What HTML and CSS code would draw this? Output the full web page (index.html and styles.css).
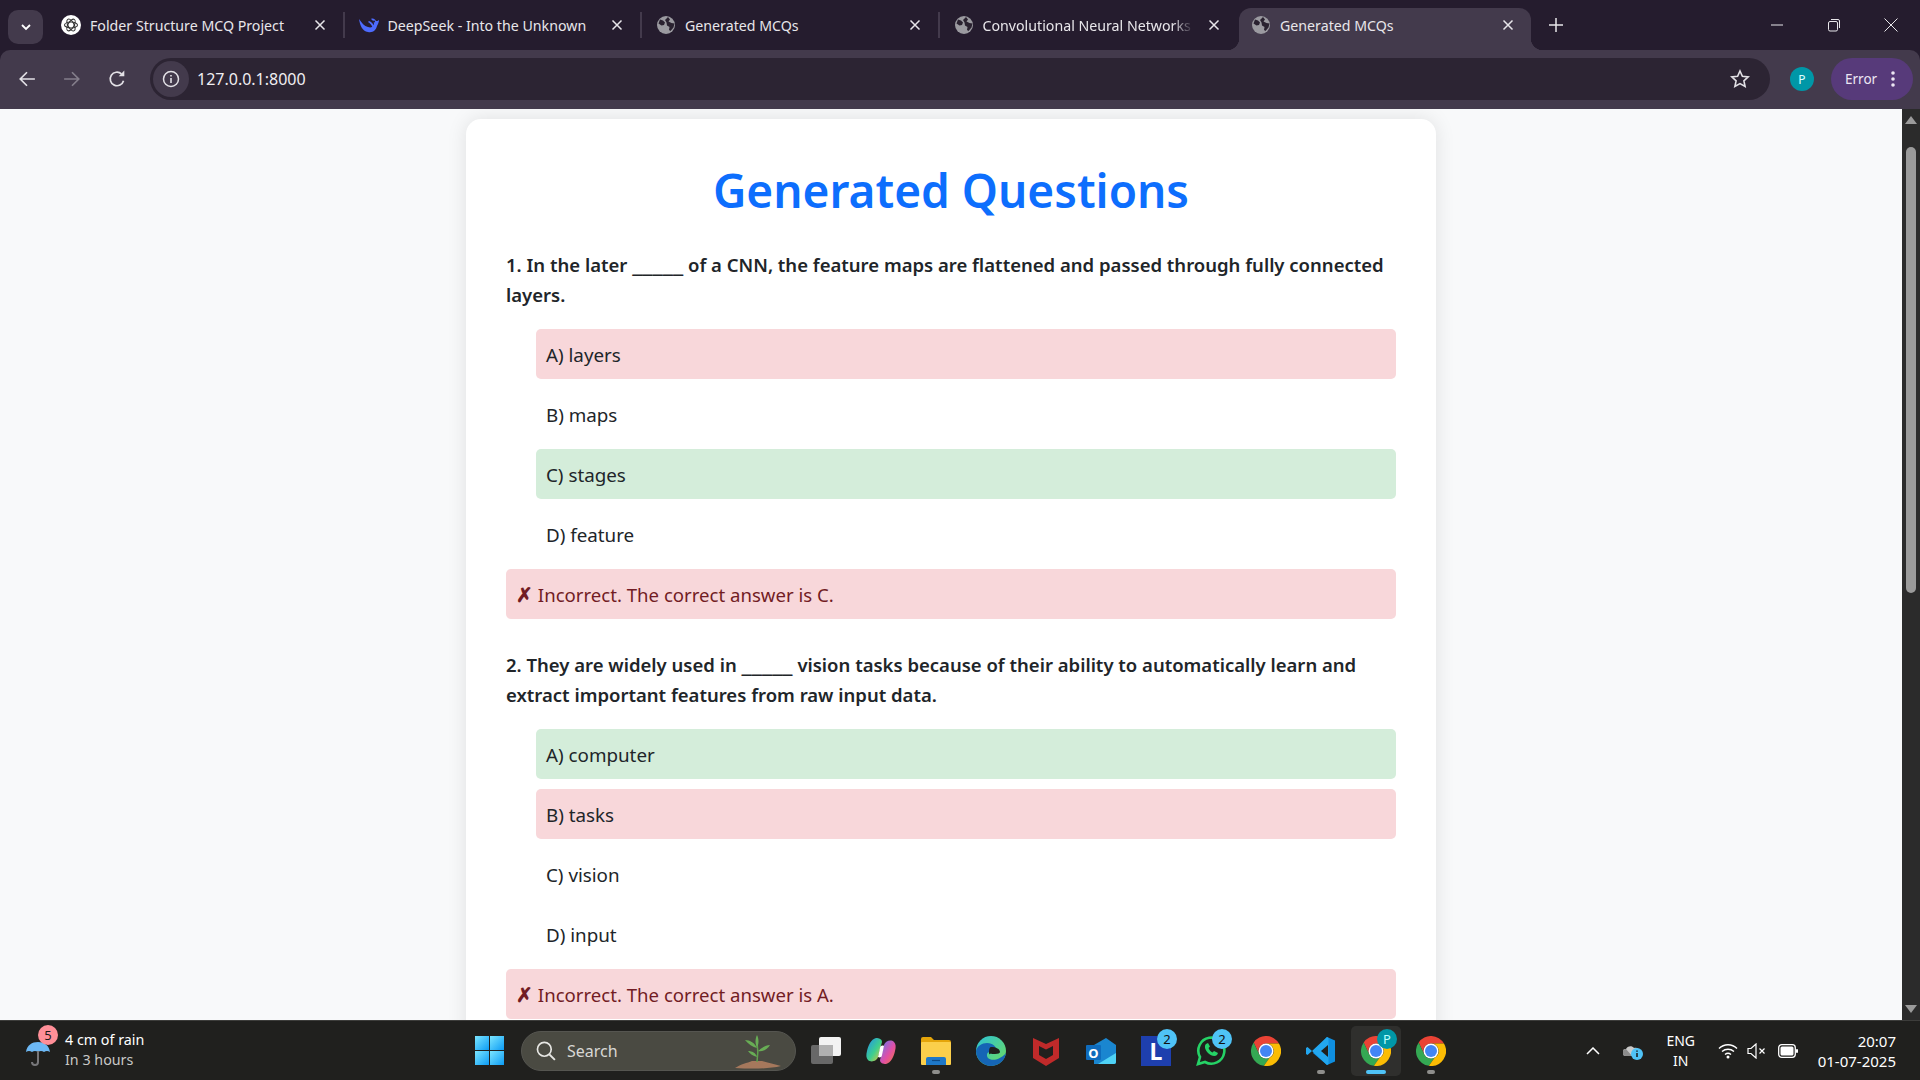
FILE: index.html
```html
<!DOCTYPE html>
<html lang="en">
<head>
    <meta charset="UTF-8">
    <meta name="viewport" content="width=device-width, initial-scale=1.0">
    <title>Generated MCQs</title>
    <link rel="stylesheet" href="styles.css">
</head>
<body>

    <!-- shared icons -->
    <svg class="sprite" aria-hidden="true">
        <defs>
            <linearGradient id="winGrad" x1="0" y1="0" x2="1" y2="1">
                <stop offset="0" stop-color="#7be6ff"/>
                <stop offset="1" stop-color="#0c9bf5"/>
            </linearGradient>
            <linearGradient id="edgeGrad" x1="0" y1="0" x2="1" y2="1">
                <stop offset="0" stop-color="#2cc3d8"/>
                <stop offset="1" stop-color="#6fdc5a"/>
            </linearGradient>
            <linearGradient id="copilotA" x1="0" y1="0" x2="1" y2="1">
                <stop offset="0" stop-color="#1f8ff0"/>
                <stop offset="0.55" stop-color="#3ecf8e"/>
                <stop offset="1" stop-color="#f7c531"/>
            </linearGradient>
            <linearGradient id="copilotB" x1="0" y1="0" x2="1" y2="1">
                <stop offset="0" stop-color="#5b7cf5"/>
                <stop offset="0.55" stop-color="#e04fa8"/>
                <stop offset="1" stop-color="#f5793a"/>
            </linearGradient>
        </defs>
        <symbol id="globe" viewBox="0 0 20 20">
            <circle cx="10" cy="10" r="9" fill="#9b9aa0"/>
            <path d="M4 4.500l3 1 2 2-1 2.500-2.500.5-3-2zM12 2l2 2.500-1.500 2 3 1.500 3 .5-1 4-3 3.500-1.500-1 .5-3-2.500-1.500-.5-3-1.500-2.500z" fill="#2a2230"/>
        </symbol>
        <symbol id="close-x" viewBox="0 0 12 12">
            <path d="M1.500 1.500l9 9M10.500 1.500l-9 9" stroke="#e8e6ea" stroke-width="1.500" fill="none"/>
        </symbol>
        <symbol id="chrome" viewBox="4 4 40 40">
            <path d="M7.600 12.500A20 20 0 0 1 41.300 14H24a10 10 0 0 0-9 14.500z" fill="#ea4335"/>
            <path d="M7.600 12.500A20 20 0 0 0 21.200 43.800L29 32.700A10 10 0 0 1 15 28.500z" fill="#34a853"/>
            <path d="M41.300 14H24a10 10 0 0 1 5 18.700L21.200 43.800A20 20 0 0 0 41.300 14z" fill="#fbbc04"/>
            <circle cx="24" cy="24" r="10" fill="#fff"/>
            <circle cx="24" cy="24" r="8" fill="#4285f4"/>
        </symbol>
    </svg>

    <header class="tabstrip">
        <button class="tab-menu">
            <svg class="ic-12" viewBox="0 0 12 12"><path d="M2 4l4 4 4-4" stroke="#fff" stroke-width="1.800" fill="none"/></svg>
        </button>

        <div class="tab">
            <svg class="favicon" viewBox="0 0 20 20">
                <circle cx="10" cy="10" r="10" fill="#fff"/>
                <g fill="none" stroke="#333" stroke-width="1.100">
                    <ellipse cx="10" cy="10" rx="6.500" ry="3"/>
                    <ellipse cx="10" cy="10" rx="6.500" ry="3" transform="rotate(60 10 10)"/>
                    <ellipse cx="10" cy="10" rx="6.500" ry="3" transform="rotate(120 10 10)"/>
                </g>
            </svg>
            <span class="tab-title">Folder Structure MCQ Project</span>
            <svg class="tab-close"><use href="#close-x"/></svg>
        </div>
        <div class="tab">
            <svg class="favicon" viewBox="0 0 20 20">
                <path d="M0 4c1 6 3 12 9 13 5 1 8-2 9-6 1-2 2-4 2-6-1 1-2 1-3 1-1-2-3-3-5-2 1 1 3 2 3 5-1 3-3 4-6 3C5 11 3 8 0 4z" fill="#4d6bfe"/>
                <path d="M9 7c2 1 4 3 5 7l2-1c-1-3-3-6-6-7z" fill="#4d6bfe"/>
                <circle cx="15" cy="6.500" r="1" fill="#251c2e"/>
            </svg>
            <span class="tab-title">DeepSeek - Into the Unknown</span>
            <svg class="tab-close"><use href="#close-x"/></svg>
        </div>
        <div class="tab">
            <svg class="favicon"><use href="#globe"/></svg>
            <span class="tab-title">Generated MCQs</span>
            <svg class="tab-close"><use href="#close-x"/></svg>
        </div>
        <div class="tab tab-last">
            <svg class="favicon"><use href="#globe"/></svg>
            <span class="tab-title tab-fade">Convolutional Neural Networks</span>
            <svg class="tab-close"><use href="#close-x"/></svg>
        </div>
        <div class="tab tab-active">
            <svg class="favicon"><use href="#globe"/></svg>
            <span class="tab-title">Generated MCQs</span>
            <svg class="tab-close"><use href="#close-x"/></svg>
        </div>
        <svg class="new-tab" viewBox="0 0 14 14"><path d="M7 0v14M0 7h14" stroke="#e8e6ea" stroke-width="1.500"/></svg>

        <div class="win-controls">
            <svg class="win-btn" viewBox="0 0 14 14"><path d="M1 7h12" stroke="#e8e6ea"/></svg>
            <svg class="win-btn" viewBox="0 0 14 14"><rect x="1.500" y="3.500" width="9" height="9.500" rx="1.500" fill="none" stroke="#e8e6ea"/><path d="M4 1.500h7a1.500 1.500 0 0 1 1.500 1.500v7" fill="none" stroke="#e8e6ea"/></svg>
            <svg class="win-btn" viewBox="0 0 14 14"><path d="M.5.500l13 13M13.500.500l-13 13" stroke="#e8e6ea"/></svg>
        </div>
    </header>

    <nav class="toolbar">
        <svg class="nav-icon" viewBox="0 0 16 16"><path d="M15 8H2M8 2L2 8l6 6" fill="none" stroke="#e3e1e6" stroke-width="1.500"/></svg>
        <svg class="nav-icon" viewBox="0 0 16 16"><path d="M1 8h13M8 2l6 6-6 6" fill="none" stroke="#847e8b" stroke-width="1.500"/></svg>
        <svg class="nav-icon" viewBox="0 0 16 16"><path d="M13.800 9.500A6 6 0 1 1 12 3.500" fill="none" stroke="#e3e1e6" stroke-width="1.500"/><path d="M9.500 5.500H14.500V.5z" fill="#e3e1e6"/></svg>

        <div class="omnibox">
            <span class="site-info">
                <svg class="ic-18" viewBox="0 0 18 18"><circle cx="9" cy="9" r="7.500" fill="none" stroke="#e3e1e6" stroke-width="1.500"/><path d="M9 8v5M9 5v1.600" stroke="#e3e1e6" stroke-width="1.600"/></svg>
            </span>
            <span class="url">127.0.0.1:8000</span>
            <svg class="star" viewBox="0 0 20 20"><path d="M10 2l2.400 5.300 5.800.6-4.300 3.900 1.200 5.700L10 14.600l-5.100 2.900 1.200-5.700L1.800 7.900l5.800-.6z" fill="none" stroke="#e3e1e6" stroke-width="1.600"/></svg>
        </div>

        <span class="avatar">P</span>
        <div class="error-pill">
            <span>Error</span>
            <svg class="dots" viewBox="0 0 4 18"><circle cx="2" cy="3" r="1.800"/><circle cx="2" cy="9" r="1.800"/><circle cx="2" cy="15" r="1.800"/></svg>
        </div>
    </nav>

    <div class="viewport">
        <main class="page">
            <section class="card">
                <h1>Generated Questions</h1>

                <div class="question">
                    <p class="q-text">1. In the later <span class="blank">_____</span> of a CNN, the feature maps are flattened and passed through fully connected<br>layers.</p>
                    <ul class="options">
                        <li class="wrong">A) layers</li>
                        <li>B) maps</li>
                        <li class="right">C) stages</li>
                        <li>D) feature</li>
                    </ul>
                    <div class="result"><span class="mark">✗</span> Incorrect. The correct answer is C.</div>
                </div>

                <div class="question">
                    <p class="q-text">2. They are widely used in <span class="blank">_____</span> vision tasks because of their ability to automatically learn and<br>extract important features from raw input data.</p>
                    <ul class="options">
                        <li class="right">A) computer</li>
                        <li class="wrong">B) tasks</li>
                        <li>C) vision</li>
                        <li>D) input</li>
                    </ul>
                    <div class="result"><span class="mark">✗</span> Incorrect. The correct answer is A.</div>
                </div>
            </section>
        </main>

        <aside class="scrollbar">
            <svg class="sb-arrow" viewBox="0 0 12 8"><path d="M6 0l6 8H0z"/></svg>
            <div class="sb-track"><div class="sb-thumb"></div></div>
            <svg class="sb-arrow" viewBox="0 0 12 8"><path d="M6 8l6-8H0z"/></svg>
        </aside>
    </div>

    <footer class="taskbar">
        <div class="weather">
            <span class="weather-icon">
                <svg class="ic-26" viewBox="0 0 26 30">
                    <path d="M1 16C2 9 7 6 13 6s11 3 12 10c-2-1.500-4-1.500-6 0-2-1.500-4-1.500-6 0-2-1.500-4-1.500-6 0-2-1.500-4-1.500-6 0z" fill="#6db9f5"/>
                    <path d="M13 15v11a3 3 0 0 1-6 0" fill="none" stroke="#77777a" stroke-width="2"/>
                </svg>
                <span class="weather-badge">5</span>
            </span>
            <div class="weather-text">
                <span class="weather-main">4 cm of rain</span>
                <span class="weather-sub">In 3 hours</span>
            </div>
        </div>

        <div class="task-item">
            <svg class="ic-29" viewBox="0 0 29 29">
                <rect width="14" height="14" fill="url(#winGrad)"/><rect x="15" width="14" height="14" fill="url(#winGrad)"/>
                <rect y="15" width="14" height="14" fill="url(#winGrad)"/><rect x="15" y="15" width="14" height="14" fill="url(#winGrad)"/>
            </svg>
        </div>

        <div class="search">
            <svg class="search-glass" viewBox="0 0 18 18"><circle cx="7.500" cy="7.500" r="6.200" fill="none" stroke="#e6e6e3" stroke-width="1.500"/><path d="M12 12l5 5" stroke="#e6e6e3" stroke-width="1.800"/></svg>
            <span class="search-label">Search</span>
            <svg class="plant" viewBox="0 0 46 34">
                <path d="M0 33c6-4 12-5 17-7h10c6 2 13 3 19 5-12 3-30 3-46 2z" fill="#a5785c"/>
                <path d="M22 27c1-6 1-14 0-20" stroke="#5fa04e" stroke-width="1.500" fill="none"/>
                <path d="M22 13C18 12 13 9 10 5c5 0 10 3 12 8zM23 16c3-3 8-6 12-6-2 4-7 7-12 6zM22 22c-4-1-7-3-9-6 4 0 8 2 9 6zM22 12c-2-3-2-8 0-12 2 4 2 9 0 12z" fill="#68ad55"/>
            </svg>
        </div>

        <div class="task-item">
            <svg class="ic-30" viewBox="0 0 30 28">
                <rect x="8" y="0" width="22" height="19" rx="2" fill="#f2f2f2"/>
                <rect y="8" width="22" height="19" rx="2" fill="#686868"/>
                <rect x="8" y="8" width="14" height="11" fill="#b0b0b0"/>
            </svg>
        </div>
        <div class="task-item">
            <svg class="ic-30" viewBox="0 0 30 28">
                <path d="M10 1c3 0 6 1 6 4l-4 15c-1 4-7 6-10 3-2-2-2-5-1-9C2 9 5 2 10 1z" fill="url(#copilotA)"/>
                <path d="M20 27c-3 0-6-1-6-4l4-15c1-4 7-6 10-3 2 2 2 5 1 9-1 5-4 12-9 13z" fill="url(#copilotB)"/>
                <path d="M12 20c2 1 4 0 4-2l2-9c-2-1-4 0-4 2z" fill="#ffffff"/>
            </svg>
        </div>
        <div class="task-item has-dot">
            <svg class="ic-30" viewBox="0 0 30 28">
                <path d="M0 2a2 2 0 0 1 2-2h8l3 3h15a2 2 0 0 1 2 2v4H0z" fill="#e5a50a"/>
                <rect y="5" width="30" height="23" rx="1" fill="#fbcf4b"/>
                <path d="M5 26v-4a2 2 0 0 1 2-2h16a2 2 0 0 1 2 2v6H5z" fill="#1e78c8"/>
                <path d="M11 23.500h8" stroke="#0d4a86" stroke-width="1.200"/>
            </svg>
        </div>
        <div class="task-item">
            <svg class="ic-30" viewBox="0 0 30 30">
                <circle cx="15" cy="15" r="15" fill="url(#edgeGrad)"/>
                <path d="M30 17c-1 8-8 13-15 13C7 30 0 23 0 15c1-5 6-8 11-8 6 0 10 4 9 8-1 1-3 2-6 1-3 0-4 3-2 6 3 3 11 3 18-5z" fill="#1565b5"/>
                <path d="M15 11c5 0 9 2 9 5 0 1-2 2-5 2-4 0-6-1-6 1 0-4 0-8 2-8z" fill="#20201e"/>
            </svg>
        </div>
        <div class="task-item">
            <svg class="ic-28" viewBox="0 0 28 30">
                <path d="M1 2l13 6 13-6v20l-13 8-13-8z" fill="#c02a2a"/>
                <path d="M7 10l7 3.500 7-3.500v9l-7 4-7-4z" fill="#20201e"/>
            </svg>
        </div>
        <div class="task-item">
            <svg class="ic-30" viewBox="0 0 30 28">
                <path d="M8 8l12-7 10 7v17a2 2 0 0 1-2 2H8z" fill="#1a86d0"/>
                <path d="M12 27l18-11v9a2 2 0 0 1-2 2z" fill="#4fd2f5"/>
                <rect y="8" width="15" height="15" rx="1" fill="#0f6cbd"/>
                <text class="outlook-o" x="7.500" y="20.500">O</text>
            </svg>
        </div>
        <div class="task-item">
            <span class="lingo">L</span>
            <span class="count-badge">2</span>
        </div>
        <div class="task-item">
            <svg class="ic-30" viewBox="0 0 30 30">
                <path d="M2 28l2-7A13 13 0 1 1 9 26z" fill="none" stroke="#25d366" stroke-width="2.600"/>
                <path d="M10 8c-2 2-1 6 2 9s7 4 9 2l1-2-4-2-1.500 1.500c-2-1-3-2.500-4-4.500L14 10.500l-2-3.500z" fill="#25d366"/>
            </svg>
            <span class="count-badge">2</span>
        </div>
        <div class="task-item"><svg class="ic-30"><use href="#chrome"/></svg></div>
        <div class="task-item has-dot">
            <svg class="ic-30" viewBox="0 0 30 30">
                <path d="M21 1l8 3.500v21L21 29 7 17z" fill="#0f8fe0"/>
                <path d="M21 1L6 15 1.500 11 0 12v6l1.500 1L6 15l15 14 1.500-1V2z" fill="#22a7f0"/>
                <path d="M22 9l-7 6 7 6z" fill="#20201e"/>
            </svg>
        </div>
        <div class="task-item task-current">
            <svg class="ic-30"><use href="#chrome"/></svg>
            <span class="profile-badge">P</span>
        </div>
        <div class="task-item has-dot"><svg class="ic-30"><use href="#chrome"/></svg></div>

        <div class="tray">
            <svg class="tray-chevron" viewBox="0 0 14 8"><path d="M1 7l6-6 6 6" fill="none" stroke="#fff" stroke-width="1.500"/></svg>
            <svg class="tray-cloud" viewBox="0 0 20 18">
                <path d="M3 14a3.500 3.500 0 0 1 0-7c1-3 6-4 8-1 3-1 6 1 6 4v4z" fill="#c9c9c9"/>
                <path d="M3 14a3.500 3.500 0 0 1 0-7l6 7z" fill="#8c8c8c"/>
                <circle cx="14" cy="12" r="6" fill="#4fc3f7"/>
                <path d="M14 11v4M14 8.500v1.300" stroke="#1a1a18" stroke-width="1.500"/>
            </svg>
            <div class="lang"><span>ENG</span><span>IN</span></div>
            <svg class="tray-wifi" viewBox="0 0 20 16">
                <path d="M1 5.500c5-5 13-5 18 0M4 8.500c3.500-3 8.500-3 12 0M7 11.500c1.800-1.500 4.200-1.500 6 0" fill="none" stroke="#fff" stroke-width="1.400"/>
                <circle cx="10" cy="14" r="1.500" fill="#fff"/>
            </svg>
            <svg class="tray-vol" viewBox="0 0 20 16">
                <path d="M1 5.500h3L9 1v14l-5-4.500H1z" fill="none" stroke="#fff" stroke-width="1.200"/>
                <path d="M12.500 5.500l5 5M17.500 5.500l-5 5" stroke="#fff" stroke-width="1.200"/>
            </svg>
            <svg class="tray-batt" viewBox="0 0 20 14">
                <rect x=".7" y=".7" width="16.600" height="12.600" rx="3" fill="none" stroke="#fff" stroke-width="1.300"/>
                <rect x="2.500" y="2.500" width="13" height="9" rx="1.500" fill="#fff"/>
                <rect x="18" y="5" width="2" height="4" rx="1" fill="#fff"/>
            </svg>
            <div class="clock"><span>20:07</span><span>01-07-2025</span></div>
        </div>
    </footer>

</body>
</html>
```

FILE: styles.css
```css
/* Page frame: tab strip, toolbar, web page, taskbar */
* {
    box-sizing: border-box;
}
body {
    margin: 0;
    height: 100vh;
    overflow: hidden;
    display: flex;
    flex-direction: column;
    font-family: 'Noto Sans', 'Open Sans', sans-serif;
    background-color: #251c2e;
}
.sprite {
    position: absolute;
    width: 0;
    height: 0;
}
.ic-12 { width: 12px; height: 12px; }
.ic-18 { width: 18px; height: 18px; }
.ic-26 { width: 26px; height: 30px; }
.ic-28 { width: 28px; height: 30px; }
.ic-29 { width: 29px; height: 29px; }
.ic-30 { width: 30px; height: 30px; }

/* Tab strip */
.tabstrip {
    height: 50px;
    flex-shrink: 0;
    display: flex;
    align-items: flex-start;
    padding: 8px 0 0 8px;
    background-color: #251c2e;
    color: #e8e6ea;
    font-size: 14.200px;
}
.tab-menu {
    width: 35px;
    height: 34px;
    margin: 2px 4px 0 0;
    border: none;
    border-radius: 10px;
    background-color: #433a4c;
    display: flex;
    align-items: center;
    justify-content: center;
}
.tab {
    width: 297.500px;
    height: 26px;
    margin-top: 4px;
    padding: 0 0 0 14px;
    display: flex;
    align-items: center;
    gap: 10px;
    border-right: 2px solid #433a4c;
}
.tab-last {
    border-right: none;
}
.tab-active {
    width: 292px;
    height: 42px;
    margin: 0 0 0 2px;
    padding: 0 0 8px 12px;
    border-right: none;
    border-radius: 12px 12px 0 0;
    background-color: #433a4c;
    position: relative;
}
/* little curves where the active tab meets the toolbar */
.tab-active::before,
.tab-active::after {
    content: "";
    position: absolute;
    bottom: 0;
    width: 12px;
    height: 12px;
}
.tab-active::before {
    left: -12px;
    background: radial-gradient(circle at 0 0, #251c2e 12px, #433a4c 12.500px);
}
.tab-active::after {
    right: -12px;
    background: radial-gradient(circle at 100% 0, #251c2e 12px, #433a4c 12.500px);
}
.favicon {
    width: 20px;
    height: 20px;
    flex-shrink: 0;
}
.tab-title {
    flex: 1;
    min-width: 0;
    white-space: nowrap;
    margin-left: -1px;
}
.tab-fade {
    -webkit-mask-image: linear-gradient(to right, #000 88%, transparent 98%);
    mask-image: linear-gradient(to right, #000 88%, transparent 98%);
}
.tab-close {
    width: 12px;
    height: 12px;
    flex-shrink: 0;
    margin-right: 17px;
}
.new-tab {
    width: 14px;
    height: 14px;
    margin: 10px 0 0 18px;
}
.win-controls {
    margin-left: auto;
    display: flex;
    gap: 43px;
    padding: 10px 22px 0 0;
}
.win-btn {
    width: 14px;
    height: 14px;
}

/* Toolbar */
.toolbar {
    height: 59px;
    flex-shrink: 0;
    display: flex;
    align-items: center;
    padding: 0 7px 1px 18px;
    background-color: #433a4c;
    border-radius: 10px 10px 0 0;
}
.nav-icon {
    width: 18px;
    height: 18px;
    margin-right: 27px;
}
.omnibox {
    width: 1620px;
    height: 42px;
    margin-left: -3px;
    padding: 0 20px 0 3px;
    display: flex;
    align-items: center;
    border-radius: 21px;
    background-color: #2c2433;
}
.site-info {
    width: 36px;
    height: 36px;
    border-radius: 50%;
    background-color: #433a4c;
    display: flex;
    align-items: center;
    justify-content: center;
}
.url {
    margin-left: 8px;
    font-size: 16px;
    color: #f0eef2;
}
.star {
    width: 20px;
    height: 20px;
    margin-left: auto;
}
.avatar {
    width: 24px;
    height: 24px;
    margin-left: 20px;
    border-radius: 50%;
    background-color: #0097a7;
    color: #dff;
    font-size: 12px;
    display: flex;
    align-items: center;
    justify-content: center;
}
.error-pill {
    width: 82px;
    height: 42px;
    margin-left: 17px;
    padding: 0 18px 0 14px;
    border-radius: 21px;
    background-color: #573a7a;
    color: #ece6f3;
    font-size: 13.500px;
    display: flex;
    align-items: center;
    justify-content: space-between;
}
.dots {
    width: 4px;
    height: 18px;
    fill: #ece6f3;
}

/* Web page */
.viewport {
    flex: 1;
    min-height: 0;
    display: flex;
}
.page {
    flex: 1;
    min-width: 0;
    overflow: hidden;
    padding-top: 10px;
    background-color: #f8f9fa;
}
.card {
    width: 970px;
    margin: 0 auto;
    padding: 42px 40px 40px;
    border-radius: 15px;
    background-color: #fff;
    box-shadow: 0 0 20px rgba(0, 0, 0, 0.1);
    color: #212529;
}
h1 {
    margin: 0 0 31px;
    text-align: center;
    font-size: 46px;
    font-weight: 600;
    line-height: 58px;
    color: #0d6efd;
}
.question {
    margin-bottom: 31px;
}
.q-text {
    margin: 0 0 19px;
    font-size: 18.500px;
    font-weight: 600;
    line-height: 30px;
    white-space: nowrap;
}
.blank {
    font-size: 23px;
    font-weight: 400;
    line-height: 1;
}
.options {
    list-style: none;
    margin: 0 0 10px 30px;
    padding: 0;
}
.options li {
    height: 50px;
    margin-bottom: 10px;
    padding: 1px 10px 0;
    border-radius: 5px;
    font-size: 18.800px;
    line-height: 50px;
}
.wrong {
    background-color: #f8d7da;
}
.right {
    background-color: #d4edda;
}
.result {
    height: 50px;
    padding: 1px 10px 0;
    border-radius: 5px;
    background-color: #f8d7da;
    color: #721c24;
    font-size: 18.600px;
    line-height: 50px;
}
.mark {
    font-size: 20px;
    font-weight: 700;
}
.scrollbar {
    width: 18px;
    flex-shrink: 0;
    display: flex;
    flex-direction: column;
    align-items: center;
    padding: 7px 0;
    background-color: #2b2b2b;
}
.sb-arrow {
    width: 12px;
    height: 8px;
    fill: #9b9b9b;
}
.sb-track {
    flex: 1;
    padding-top: 23px;
}
.sb-thumb {
    width: 10px;
    height: 446px;
    border-radius: 5px;
    background-color: #9b9b9b;
}

/* Windows taskbar */
.taskbar {
    height: 60px;
    flex-shrink: 0;
    display: flex;
    align-items: center;
    background-color: #20201e;
    border-top: 1px solid #3d3d3b;
    color: #fff;
}
.weather {
    width: 461.500px;
    padding-left: 25px;
    display: flex;
    align-items: center;
    gap: 14px;
}
.weather-icon {
    position: relative;
    display: flex;
}
.weather-badge {
    position: absolute;
    top: -11px;
    left: 13px;
    width: 20px;
    height: 20px;
    border-radius: 50%;
    background-color: #ff8f98;
    color: #1a1a18;
    font-size: 13px;
    line-height: 20px;
    text-align: center;
}
.weather-text {
    display: flex;
    flex-direction: column;
    margin-top: -2px;
    font-size: 14.300px;
    line-height: 20px;
}
.weather-sub {
    color: #c8c8c6;
}
.task-item {
    width: 55px;
    height: 50px;
    flex-shrink: 0;
    position: relative;
    display: flex;
    align-items: center;
    justify-content: center;
}
.has-dot::after {
    content: "";
    position: absolute;
    bottom: 2px;
    left: 23.500px;
    width: 8px;
    height: 4px;
    border-radius: 2px;
    background-color: #8e8e8c;
}
.task-current {
    width: 50px;
    margin: 0 2.500px;
    border-radius: 5px;
    background-color: #2f2f2d;
}
.task-current::after {
    content: "";
    position: absolute;
    bottom: 2px;
    left: 15px;
    width: 20px;
    height: 4px;
    border-radius: 2px;
    background-color: #4fc3f7;
}
.search {
    width: 275px;
    height: 40px;
    flex-shrink: 0;
    margin: 0 2.500px 0 4.500px;
    padding: 0 14px 0 14px;
    display: flex;
    align-items: center;
    border: 1px solid #555550;
    border-radius: 20px;
    background-color: #4a4a42;
    overflow: hidden;
}
.search-glass {
    width: 20px;
    height: 20px;
}
.search-label {
    margin-left: 11px;
    font-size: 16px;
    color: #d8d8d4;
}
.plant {
    width: 46px;
    height: 34px;
    margin: 2px 0 0 auto;
}
.outlook-o {
    font-size: 13px;
    font-weight: 700;
    fill: #fff;
    text-anchor: middle;
    font-family: 'Noto Sans', sans-serif;
}
.lingo {
    width: 30px;
    height: 30px;
    background-color: #1e3fae;
    color: #fff;
    font-size: 23px;
    font-weight: 700;
    line-height: 30px;
    text-align: center;
}
.count-badge,
.profile-badge {
    position: absolute;
    top: 3.500px;
    right: 6.500px;
    width: 20px;
    height: 20px;
    border-radius: 50%;
    background-color: #4fc3f7;
    color: #111;
    font-size: 13px;
    line-height: 20px;
    text-align: center;
}
.profile-badge {
    right: 4px;
    background-color: #0097a7;
    color: #bff;
}

/* System tray */
.tray {
    margin-left: auto;
    padding-right: 24px;
    display: flex;
    align-items: center;
    font-size: 14px;
    line-height: 20px;
}
.tray-chevron { width: 14px; height: 8px; }
.tray-cloud { width: 20px; height: 18px; margin-left: 23px; }
.tray-wifi { width: 20px; height: 16px; margin-left: 17px; }
.tray-vol { width: 20px; height: 16px; margin-left: 9px; }
.tray-batt { width: 20px; height: 14px; margin-left: 11px; }
.lang {
    width: 40px;
    margin-left: 18px;
    display: flex;
    flex-direction: column;
    align-items: center;
}
.clock {
    margin-left: 20px;
    font-size: 15px;
    display: flex;
    flex-direction: column;
    align-items: flex-end;
}
```
